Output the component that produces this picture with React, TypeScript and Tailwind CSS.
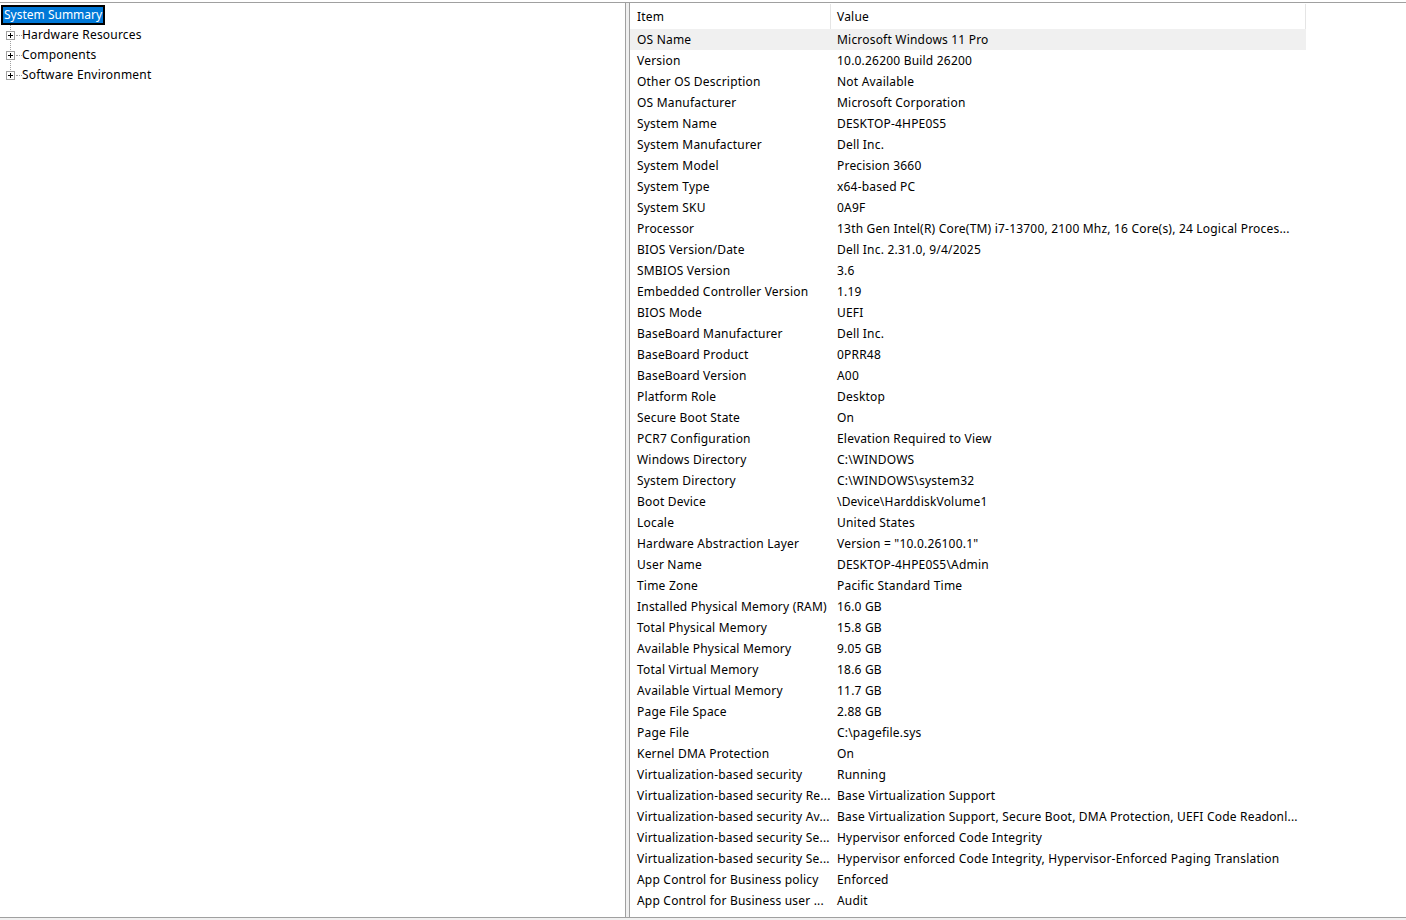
import React from "react";

const rows: [string, string][] = [
  ["OS Name", "Microsoft Windows 11 Pro"],
  ["Version", "10.0.26200 Build 26200"],
  ["Other OS Description", "Not Available"],
  ["OS Manufacturer", "Microsoft Corporation"],
  ["System Name", "DESKTOP-4HPE0S5"],
  ["System Manufacturer", "Dell Inc."],
  ["System Model", "Precision 3660"],
  ["System Type", "x64-based PC"],
  ["System SKU", "0A9F"],
  ["Processor", "13th Gen Intel(R) Core(TM) i7-13700, 2100 Mhz, 16 Core(s), 24 Logical Proces..."],
  ["BIOS Version/Date", "Dell Inc. 2.31.0, 9/4/2025"],
  ["SMBIOS Version", "3.6"],
  ["Embedded Controller Version", "1.19"],
  ["BIOS Mode", "UEFI"],
  ["BaseBoard Manufacturer", "Dell Inc."],
  ["BaseBoard Product", "0PRR48"],
  ["BaseBoard Version", "A00"],
  ["Platform Role", "Desktop"],
  ["Secure Boot State", "On"],
  ["PCR7 Configuration", "Elevation Required to View"],
  ["Windows Directory", "C:\\WINDOWS"],
  ["System Directory", "C:\\WINDOWS\\system32"],
  ["Boot Device", "\\Device\\HarddiskVolume1"],
  ["Locale", "United States"],
  ["Hardware Abstraction Layer", 'Version = "10.0.26100.1"'],
  ["User Name", "DESKTOP-4HPE0S5\\Admin"],
  ["Time Zone", "Pacific Standard Time"],
  ["Installed Physical Memory (RAM)", "16.0 GB"],
  ["Total Physical Memory", "15.8 GB"],
  ["Available Physical Memory", "9.05 GB"],
  ["Total Virtual Memory", "18.6 GB"],
  ["Available Virtual Memory", "11.7 GB"],
  ["Page File Space", "2.88 GB"],
  ["Page File", "C:\\pagefile.sys"],
  ["Kernel DMA Protection", "On"],
  ["Virtualization-based security", "Running"],
  ["Virtualization-based security Re...", "Base Virtualization Support"],
  ["Virtualization-based security Av...", "Base Virtualization Support, Secure Boot, DMA Protection, UEFI Code Readonl..."],
  ["Virtualization-based security Se...", "Hypervisor enforced Code Integrity"],
  ["Virtualization-based security Se...", "Hypervisor enforced Code Integrity, Hypervisor-Enforced Paging Translation"],
  ["App Control for Business policy", "Enforced"],
  ["App Control for Business user ...", "Audit"],
];

const treeItems = ["Hardware Resources", "Components", "Software Environment"];

function PlusBox() {
  return (
    <svg width="9" height="9" viewBox="0 0 9 9" className="shrink-0">
      <rect x="0.5" y="0.5" width="8" height="8" fill="#fff" stroke="#a0a0a0" />
      <path d="M2 4.5h5M4.5 2v5" stroke="#000" strokeWidth="1" />
    </svg>
  );
}

export default function App() {
  return (
    <div
      className="w-[1406px] h-[920px] bg-white flex flex-col text-[12px] tracking-[0.2px] text-black overflow-hidden"
      style={{ fontFamily: '"Noto Sans", "Open Sans", sans-serif' }}
    >
      <div className="h-[2px] bg-white" />
      <div className="flex h-[916px] border-y border-[#a0a0a0]">
        {/* tree pane */}
        <div className="w-[626px] border-r border-[#a0a0a0] bg-white pt-[2px]">
          <div className="ml-[1px] h-[20px] w-[104px] border-2 border-black bg-[#0078d7] text-white flex items-center pl-[1px] leading-none tracking-normal">
            System Summary
          </div>
          <div className="relative">
            <div className="absolute left-[10px] top-0 h-[51px] border-l border-dotted border-[#a0a0a0]" />
            {treeItems.map((t) => (
              <div key={t} className="relative h-[20px] flex items-center pl-[6px]">
                <PlusBox />
                <div className="w-[6px] border-t border-dotted border-[#a0a0a0] ml-[1px]" />
                <span>{t}</span>
              </div>
            ))}
          </div>
        </div>
        <div className="w-[3px] bg-[#f0f0f0]" />
        {/* list pane */}
        <div className="flex-1 border-l border-[#a0a0a0] bg-white pt-[1px]">
          <div className="flex h-[25px] items-center">
            <div className="w-[201px] h-full pl-[7px] flex items-center border-r border-[#e5e5e5]">Item</div>
            <div className="w-[475px] h-full pl-[6px] flex items-center border-r border-[#e5e5e5]">Value</div>
          </div>
          {rows.map(([k, v], i) => (
            <div
              key={i}
              className={`flex h-[21px] items-center w-[676px] ${i === 0 ? "bg-[#f0f0f0]" : ""}`}
            >
              <div className="w-[201px] pl-[7px] whitespace-nowrap overflow-hidden">{k}</div>
              <div className="w-[475px] pl-[6px] whitespace-nowrap overflow-hidden">{v}</div>
            </div>
          ))}
        </div>
      </div>
      <div className="flex-1 bg-[#f0f0f0]" />
    </div>
  );
}
